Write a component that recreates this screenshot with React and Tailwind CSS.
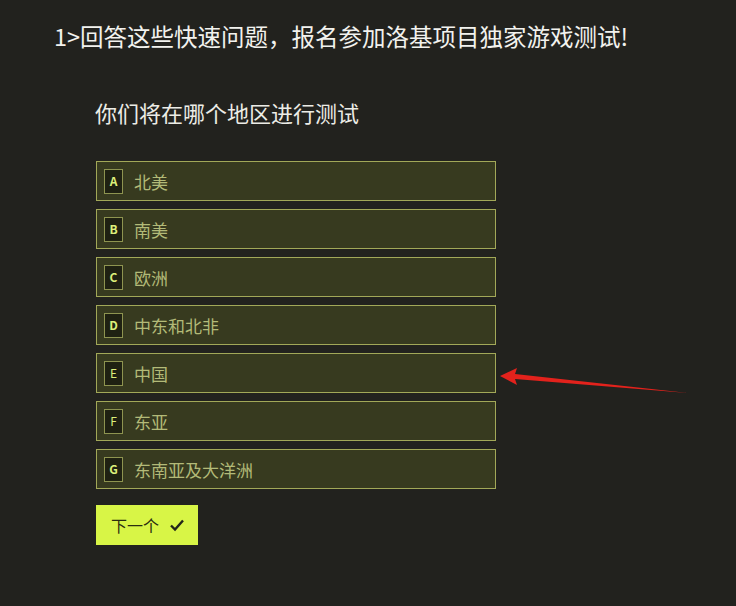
import React from "react";

const options = [
  { key: "A", label: "北美", bold: true },
  { key: "B", label: "南美", bold: true },
  { key: "C", label: "欧洲", bold: true },
  { key: "D", label: "中东和北非", bold: true },
  { key: "E", label: "中国", bold: false },
  { key: "F", label: "东亚", bold: false },
  { key: "G", label: "东南亚及大洋洲", bold: true },
];

const Option = ({ item }) => (
  <div className="flex items-center h-[40px] w-[400px] border border-[#a2a858] bg-[#373a1f] pl-[7px]">
    <span
      className={`flex items-center justify-center w-[19px] h-[25px] border border-[#8e9450] bg-[#1f2112] text-[12px] text-[#dcef7a] ${
        item.bold ? "font-bold" : "font-normal"
      }`}
    >
      {item.key}
    </span>
    <span className="ml-[11px] text-[17px] text-[#b3ba78] leading-none">{item.label}</span>
  </div>
);

export default function App() {
  return (
    <div
      className="relative w-[736px] h-[606px] bg-[#22221e] overflow-hidden"
      style={{ fontFamily: '"Noto Sans CJK SC", "Noto Sans", sans-serif' }}
    >
      <div className="pl-[54px] pt-[18px]">
        <h1 className="text-[23.5px] leading-[36px] text-[#f2f2ee] font-normal">
          1&gt;回答这些快速问题，报名参加洛基项目独家游戏测试!
        </h1>
      </div>

      <div className="pl-[95px] pt-[42px]">
        <p className="text-[22px] leading-[32px] text-[#ecece6]">你们将在哪个地区进行测试</p>

        <div className="mt-[33px] ml-[1px] flex flex-col gap-[8px]">
          {options.map((item) => (
            <Option key={item.key} item={item} />
          ))}
        </div>

        <button className="mt-[16px] ml-[1px] flex items-center gap-[10px] h-[40px] w-[102px] bg-[#d8f546] pl-[15px] text-[16px] text-[#2a2e10]">
          下一个
          <svg width="16" height="14" viewBox="0 0 16 14" fill="none">
            <path d="M2 7.5 L6 11.5 L14 2.5" stroke="#22261a" strokeWidth="2.4" />
          </svg>
        </button>
      </div>

      {/* red annotation arrow */}
      <svg className="absolute left-[495px] top-[362px]" width="200" height="36" viewBox="0 0 200 36">
        <path d="M5 14 L22 6 L20 12 L193 31 L20 17 L22 23 Z" fill="#e3221c" />
      </svg>
    </div>
  );
}
